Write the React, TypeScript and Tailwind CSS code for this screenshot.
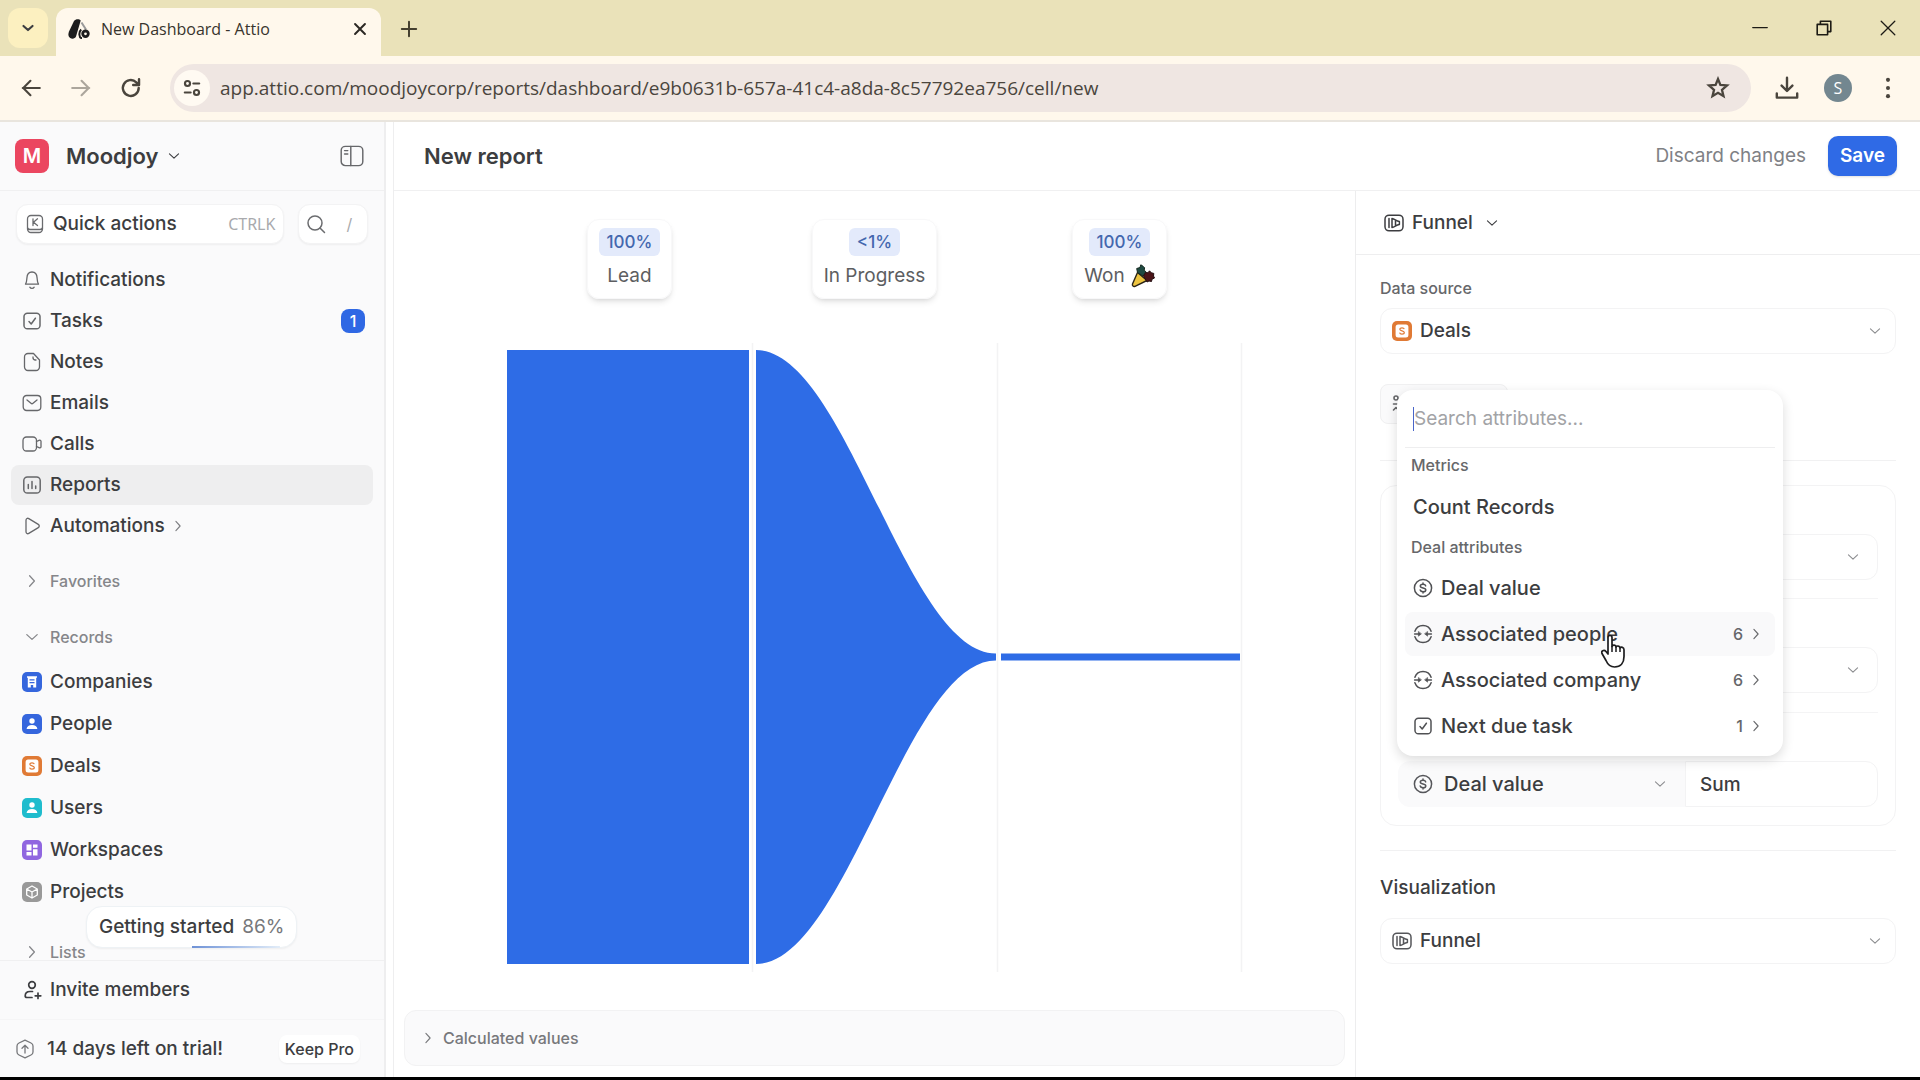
import type { ReactNode } from "react";

function Svg({ children, className = "size-5", sw = 1.3 }: { children: ReactNode; className?: string; sw?: number }) {
  return (
    <svg viewBox="0 0 20 20" fill="none" stroke="currentColor" strokeWidth={sw} strokeLinecap="round" strokeLinejoin="round" className={`shrink-0 ${className}`} aria-hidden="true">
      {children}
    </svg>
  );
}

const Chevron = ({ className = "size-4", right = false }: { className?: string; right?: boolean }) => (
  <Svg className={className} sw={1.6}>
    <path d={right ? "M7 3.5 13 10l-6 6.5" : "M3.5 7 10 13l6.5-6"} />
  </Svg>
);

const CheckBoxIcon = () => (
  <Svg sw={1.5}>
    <rect x="2" y="2.2" width="16" height="15.6" rx="3.4" />
    <path d="m7 10.6 2.200 2.400 4.200-5.800" />
  </Svg>
);

const FunnelIcon = () => (
  <Svg sw={1.5}>
    <rect x="1" y="2.200" width="18" height="15.600" rx="4" />
    <path d="M5 5.600v8.800M8 5.400v9.200c2.800-.4 4-2.600 7.400-3V8.400c-3.400-.4-4.600-2.600-7.400-3ZM11.500 8v4" />
  </Svg>
);

const CoinIcon = () => (
  <Svg sw={1.500}>
    <circle cx="10" cy="10" r="8.600" />
    <path d="M12.700 7.900c-.3-1.100-1.300-1.600-2.700-1.600-1.500 0-2.700.6-2.700 1.800 0 2.700 5.500 1.100 5.500 3.800 0 1.200-1.300 1.800-2.800 1.800-1.400 0-2.500-.6-2.800-1.700M10 4.900v1.400M10 13.700v1.400" />
  </Svg>
);

const RelationIcon = () => (
  <Svg sw={1.500}>
    <path d="M1.900 7.200a8.600 8.600 0 0 1 16.200 0M1.900 12.800a8.600 8.600 0 0 0 16.200 0" />
    <path d="M1.600 10h5M18.400 10h-5" />
    <path d="M5.400 7.800v4.400L8.200 10ZM14.600 7.800v4.400L11.800 10Z" fill="currentColor" strokeWidth="0.600" />
  </Svg>
);

const PersonGlyph = () => (
  <>
    <circle cx="10" cy="7" r="2.700" fill="white" />
    <path d="M4.600 15c.3-2.800 2.400-4.100 5.400-4.100s5.100 1.300 5.400 4.100Z" fill="white" />
  </>
);

function Tile({ color, children }: { color: string; children: ReactNode }) {
  return (
    <svg viewBox="0 0 20 20" className="size-5 shrink-0" aria-hidden="true">
      <rect width="20" height="20" rx="5" fill={color} />
      {children}
    </svg>
  );
}

const DealsTile = () => (
  <Tile color="#e07a35">
    <rect x="3.600" y="3.600" width="12.800" height="12.800" rx="2.500" fill="white" />
    <path d="M12.300 8.100c-.3-.9-1.100-1.300-2.300-1.300-1.300 0-2.200.5-2.200 1.500 0 2.200 4.500 1 4.500 3.300 0 1-1 1.600-2.300 1.600s-2.200-.5-2.400-1.500" fill="none" stroke="#e07a35" strokeWidth="1.200" />
  </Tile>
);

const navItems: { label: string; icon: ReactNode; active?: boolean; badge?: string; more?: boolean }[] = [
  { label: "Notifications", icon: <Svg><path d="M3.500 14.200h13c-1.200-1.600-1.200-3.400-1.400-6.200C14.900 4.300 13 2 10 2S5.100 4.300 4.900 8c-.2 2.800-.2 4.600-1.400 6.200ZM7.800 17.200c.5.800 1.300 1.200 2.200 1.200s1.700-.4 2.200-1.200" /></Svg> },
  { label: "Tasks", icon: <CheckBoxIcon />, badge: "1" },
  { label: "Notes", icon: <Svg><path d="M6 1.500h5.500L17.500 8v7a3.500 3.500 0 0 1-3.500 3.500H6A3.500 3.500 0 0 1 2.500 15V5A3.500 3.500 0 0 1 6 1.500ZM11 5v.5A2.500 2.500 0 0 0 13.500 8H14" /></Svg> },
  { label: "Emails", icon: <Svg><rect x="1.200" y="2.500" width="17.600" height="15" rx="3.400" /><path d="m5 7 4 3.300c.6.5 1.400.5 2 0L15 7" /></Svg> },
  { label: "Calls", icon: <Svg><rect x="1" y="3" width="13.500" height="14" rx="3.500" /><path d="M14.500 7.500 17 6.300c1-.5 2 0 2 1v5.400c0 1-1 1.500-2 1l-2.500-1.200" /></Svg> },
  { label: "Reports", icon: <Svg sw={1.500}><rect x="1.800" y="2" width="16.400" height="16" rx="3.600" /><path d="M6.300 9.500v4M10 6.500v7M13.700 11v2.500" /></Svg>, active: true },
  { label: "Automations", icon: <Svg><path d="M4 4.200c0-1.600 1.500-2.400 2.800-1.600l9.500 5.800c1.300.8 1.300 2.400 0 3.200l-9.500 5.800C5.500 18.200 4 17.400 4 15.800Z" /></Svg>, more: true },
];

const records: { label: string; icon: ReactNode }[] = [
  { label: "Companies", icon: <Tile color="#3566dd"><path d="M5 4.200h10v1.600h-.8v9.700h-3v-2.500H8.800v2.500h-3V5.800H5Z" fill="white" /><path d="M7.500 7.800h5M7.500 10.600h5" stroke="#3566dd" strokeWidth="1.200" /></Tile> },
  { label: "People", icon: <Tile color="#3566dd"><PersonGlyph /></Tile> },
  { label: "Deals", icon: <DealsTile /> },
  { label: "Users", icon: <Tile color="#1fbccd"><PersonGlyph /></Tile> },
  { label: "Workspaces", icon: <Tile color="#9066e0"><path d="M4.500 4.500h5v6h-5ZM11 4.500h4.500v3.300H11ZM4.500 12h5v3.500h-5ZM11 9.300h4.500v6.200H11Z" fill="white" /></Tile> },
  { label: "Projects", icon: <Tile color="#999999"><path d="m10 4 5.300 3v6L10 16l-5.300-3V7ZM4.700 7 10 10l5.300-3M10 10v6" fill="none" stroke="white" strokeWidth="1.300" strokeLinejoin="round" /></Tile> },
];

const attributes: { label: string; icon: ReactNode; count?: string; active?: boolean }[] = [
  { label: "Deal value", icon: <CoinIcon /> },
  { label: "Associated people", icon: <RelationIcon />, count: "6", active: true },
  { label: "Associated company", icon: <RelationIcon />, count: "6" },
  { label: "Next due task", icon: <CheckBoxIcon />, count: "1" },
];

const PartyIcon = () => (
  <svg viewBox="0 0 24 24" className="size-6" aria-hidden="true">
    <path d="M6.500 8.500 1.500 20c-.6 1.800 1 3 2.500 2.300L16 16.500Z" fill="#edc440" stroke="#2b2517" strokeWidth="1.400" />
    <path d="m6.500 8.500-.8-4L9 3.500l.8-2.700 2.200 1.400 1.600 1.600-.4 2.400 2 1.800-3.200 4Z" fill="#1f4a42" stroke="#15291f" />
    <path d="m12.500 12 2-3.500 2.500.3 1.500-2 1.800 2 2.500.6-.3 2.600 1 2-2.500 1.200-.5 2.300-2.500-.5-2 1Z" fill="#4a1418" stroke="#241012" />
  </svg>
);

const stages: { rate: string; label: string; icon?: ReactNode }[] = [
  { rate: "100%", label: "Lead" },
  { rate: "<1%", label: "In Progress" },
  { rate: "100%", label: "Won", icon: <PartyIcon /> },
];

function SelectBox({ label, value, icon, className = "rounded-xl border border-[#f3f3f4] bg-white", selectClass = "pl-[39px]", chevronClass = "mr-[13px]" }: { label: string; value?: string; icon?: ReactNode; className?: string; selectClass?: string; chevronClass?: string }) {
  return (
    <div className={`grid h-[46px] items-center ${className}`}>
      <select aria-label={label} className={`col-start-1 row-start-1 h-full w-full cursor-pointer appearance-none bg-transparent pr-10 font-medium outline-none ${selectClass}`}>
        <option>{value ?? ""}</option>
      </select>
      {icon && <span className="pointer-events-none col-start-1 row-start-1 ml-[11px] justify-self-start text-[#55565a]">{icon}</span>}
      <span className={`pointer-events-none col-start-1 row-start-1 justify-self-end text-[#8c8d90] ${chevronClass}`}><Chevron className="size-3.5" /></span>
    </div>
  );
}

function BrowserChrome() {
  return (
    <header className="shrink-0 font-['Open_Sans','Noto_Sans',sans-serif]">
      <div className="flex h-14 items-end bg-[#eae2b9]">
        <button aria-label="Search tabs" className="mb-2 ml-2 grid size-10 place-items-center self-end rounded-xl bg-[#fcf0c0]">
          <Svg className="size-3.5" sw={3}><path d="M3.500 7 10 13l6.500-6" /></Svg>
        </button>
        <div className="ml-2 flex h-12 w-[325px] items-center rounded-t-xl bg-[#fff8ec] pb-1.5 pl-3 pr-3">
          <svg viewBox="0 0 22 20" className="h-5 w-[22px] text-[#1c1c1c]" aria-hidden="true">
            <path d="M6 2C7.500-.3 11.500-.3 12.700 1.500L8 17.500c-1 2.200-3.700 2.700-5.800 1.500C.2 17.700 0 15.200 1 12.500Z" fill="currentColor" />
            <path d="m13.500 3.500 4.500 7" stroke="#999999" strokeWidth="2" />
            <path d="M13.200 10.500C10.500 13 10.800 19 14 19.200" fill="none" stroke="currentColor" strokeWidth="2" />
            <circle cx="17.500" cy="14.800" r="2.800" fill="none" stroke="currentColor" strokeWidth="2.800" />
          </svg>
          <span className="ml-[11px] flex-1 text-base text-[#38342d]">New Dashboard - Attio</span>
          <button aria-label="Close tab" className="text-[#2b2823]"><Svg className="size-[18px]" sw={2.200}><path d="m4.500 4.500 11 11M15.500 4.500l-11 11" /></Svg></button>
        </div>
        <button aria-label="New tab" className="mb-[18px] ml-[19px] text-[#45402f]"><Svg sw={2.200} className="size-[18px]"><path d="M10 2v16M2 10h16" /></Svg></button>
        <div className="mb-5 ml-auto mr-6 flex items-center gap-12 text-[#1d1b15]">
          <button aria-label="Minimize"><Svg className="size-4" sw={1.800}><path d="M1 9.500h18" /></Svg></button>
          <button aria-label="Restore"><Svg className="size-4" sw={2}><path d="M1.500 5.500h13v13h-13ZM5.500 5V1.500h13v13H15" /></Svg></button>
          <button aria-label="Close window"><Svg className="size-4" sw={1.600}><path d="m1.500 1.500 17 17M18.500 1.500l-17 17" /></Svg></button>
        </div>
      </div>
      <div className="flex h-[66px] items-center border-b-2 border-[#e9e5de] bg-[#fff8ec] pl-5 pr-5 text-[#4a453d]">
        <button aria-label="Back"><Svg sw={1.900} className="size-[22px]"><path d="M18 10H2.500M9.500 3.500 3 10l6.500 6.500" /></Svg></button>
        <button aria-label="Forward" className="ml-7 text-[#aca69c]"><Svg sw={1.900} className="size-[22px]"><path d="M2 10h15.500M10.500 3.500 17 10l-6.500 6.500" /></Svg></button>
        <button aria-label="Reload" className="ml-7"><Svg sw={2.200} className="size-[22px]"><path d="M17 10a7.200 7.200 0 1 1-2.200-5.200L17 7M17.300 2v5.200H12" /></Svg></button>
        <div className="ml-7 flex h-12 min-w-0 flex-1 items-center rounded-full bg-[#efe6e2] pl-1">
          <button aria-label="Site information" className="grid size-9 place-items-center rounded-full bg-[#fffaf2]">
            <Svg sw={2.400} className="size-[18px]"><circle cx="5" cy="5" r="2.800" /><path d="M11.500 5H18M2 15h6.500" /><circle cx="15" cy="15" r="2.800" /></Svg>
          </button>
          <input aria-label="Address" readOnly value="app.attio.com/moodjoycorp/reports/dashboard/e9b0631b-657a-41c4-a8da-8c57792ea756/cell/new" className="ml-[10px] min-w-0 flex-1 bg-transparent text-[19px] outline-none" />
          <button aria-label="Bookmark" className="mr-[21px]"><Svg sw={1.900} className="size-6"><path d="m10 2.500 2 5 5.500.4-4.200 3.600 1.300 5.300L10 14l-4.600 2.800 1.300-5.300L2.500 7.900 8 7.500Z" strokeLinejoin="miter" /></Svg></button>
        </div>
        <button aria-label="Downloads" className="ml-6"><Svg sw={2} className="size-6"><path d="M10 1.500v10.500M5.500 8 10 12.500 14.500 8M1.500 14.500V18h17v-3.500" /></Svg></button>
        <button aria-label="Profile" className="ml-[25px] grid size-7 place-items-center rounded-full bg-[#738790] text-base text-white">S</button>
        <button aria-label="Menu" className="ml-6"><Svg className="size-6"><g fill="currentColor" stroke="none"><circle cx="10" cy="3.200" r="1.700" /><circle cx="10" cy="10" r="1.700" /><circle cx="10" cy="16.800" r="1.700" /></g></Svg></button>
      </div>
    </header>
  );
}

function Sidebar() {
  return (
    <aside className="flex w-[386px] shrink-0 flex-col border-r-2 border-[#eeeeef] bg-[#fafafb]">
      <div className="flex h-[69px] shrink-0 items-center border-b border-[#f0f0f1] pl-[15px] pr-5">
        <span className="grid size-[34px] place-items-center rounded-lg bg-[#eb4660] text-xl font-semibold text-white">M</span>
        <button className="ml-[17px] flex items-center gap-2 text-[22px] font-semibold">Moodjoy <Chevron className="size-3.5" /></button>
        <button aria-label="Toggle sidebar" className="ml-auto text-[#66676a]"><Svg className="size-6" sw={1.200}><rect x="1" y="2" width="18" height="16" rx="3.500" /><path d="M9 2v16M3.800 5.500h2.700M3.800 8.300h2.700" /></Svg></button>
      </div>
      <div className="flex min-h-0 flex-1 flex-col overflow-hidden">
        <div className="flex shrink-0 gap-3.5 px-4 pt-[13px]">
          <button className="flex h-10 w-[270px] items-center rounded-xl border border-[#f3f3f4] bg-white pl-2 pr-2 shadow-xs">
            <span className="text-[#6b6c6f]"><Svg><path d="M2.500 14.500V5A3.500 3.500 0 0 1 6 1.500h8A3.500 3.500 0 0 1 17.500 5v10a3.500 3.500 0 0 1-3.500 3.500H6A3.500 3.500 0 0 1 2.500 15M2.500 13.500a2.500 2.500 0 0 0 2.500 2h10a2.500 2.500 0 0 0 2.500-2M8 4.800v6.700M12.500 4.800 8.500 8.200l4 3.300" /></Svg></span>
            <span className="ml-2 font-medium">Quick actions</span>
            <kbd className="ml-auto font-sans text-base text-[#a9aaad]">CTRLK</kbd>
          </button>
          <button aria-label="Search" className="flex h-10 w-[70px] items-center gap-5 rounded-xl border border-[#f3f3f4] bg-white pl-[7px] text-[#6b6c6f] shadow-xs">
            <Svg sw={1.500}><circle cx="9" cy="9" r="7" /><path d="m14 14 4.500 4.500" /></Svg>
            <span className="text-base text-[#a9aaad]">/</span>
          </button>
        </div>
        <nav className="mt-4 flex flex-col gap-px px-[11px]">
          {navItems.map((n) => (
            <a key={n.label} href="#" className={`flex h-10 items-center rounded-lg pl-[11px] pr-2 font-medium ${n.active ? "bg-[#eeeeef]" : ""}`}>
              <span className="text-[#66676a]">{n.icon}</span>
              <span className="ml-2">{n.label}</span>
              {n.more && <span className="ml-1.5 text-[#7c7d80]"><Chevron right className="size-3.5" /></span>}
              {n.badge && <span className="ml-auto grid size-6 place-items-center rounded-lg bg-[#2f68e4] text-base text-white">{n.badge}</span>}
            </a>
          ))}
        </nav>
        <button className="mt-[15px] flex h-10 shrink-0 items-center gap-[10px] px-6 text-base font-medium text-[#85868a]"><Chevron right /> Favorites</button>
        <button className="mt-4 flex h-10 shrink-0 items-center gap-[10px] px-6 text-base font-medium text-[#85868a]"><Chevron /> Records</button>
        <nav className="mt-[5px] flex flex-col gap-0.5 px-[22px]">
          {records.map((r) => (
            <a key={r.label} href="#" className="flex h-10 items-center gap-2 font-medium">{r.icon}{r.label}</a>
          ))}
        </nav>
        <div className="relative mt-8">
          <button className="flex h-4 items-center gap-[10px] px-6 text-base font-medium leading-4 text-[#85868a]"><Chevron right /> Lists</button>
          <button className="absolute -top-[38px] left-[86px] flex h-[42px] items-center gap-2 whitespace-nowrap rounded-2xl border border-[#eef2f5] bg-white px-3 font-medium shadow-xs">
            Getting started <span className="font-normal text-[#77787b]">86%</span>
            <span className="absolute -bottom-px right-4 h-0.5 w-[88px] bg-linear-to-r from-[#6f92d6] to-[#e3edf8]" />
          </button>
        </div>
      </div>
      <div className="shrink-0 border-t border-[#f0f0f1] bg-[#fafafb]">
        <button className="flex h-[58px] items-center gap-2 px-[22px] font-medium">
          <Svg sw={1.700}><circle cx="10" cy="5" r="3.300" /><path d="M10.500 11.500H8c-3 0-4.800 2-4.800 4.500 0 1 .8 1.500 1.800 1.500h5M16 13v5.500M13.200 15.800h5.600" /></Svg>
          Invite members
        </button>
        <div className="flex h-[58px] items-center border-t border-[#f5f5f6] pl-[15px] pr-6 font-medium">
          <span className="text-[#77787b]"><Svg><path d="m10 1.200 6 2.800c1.300.6 2 1.700 2 3v6c0 1.300-.7 2.400-2 3l-6 2.800L4 16c-1.300-.6-2-1.700-2-3V7c0-1.300.7-2.400 2-3ZM10 14V6.500M7 9.200l3-2.900 3 2.900" /></Svg></span>
          <span className="ml-3">14 days left on trial!</span>
          <button className="ml-auto rounded-lg bg-white px-1.5 py-0.5 text-base shadow-xs">Keep Pro</button>
        </div>
      </div>
    </aside>
  );
}

function FunnelChart() {
  return (
    <section aria-label="Funnel chart" className="flex min-h-0 flex-1 flex-col px-[113px] pt-7">
      <div className="grid grid-cols-3">
        {stages.map((s) => (
          <div key={s.label} className="flex h-20 flex-col items-center justify-self-center rounded-xl border border-[#f8f8f9] px-[11px] pt-2 shadow-md">
            <span className="grid h-7 place-items-center rounded-md bg-[#e3eafb] px-2 text-[17px] font-medium text-[#4467ae]">{s.rate}</span>
            <span className="mt-1.5 flex items-center gap-1.5 whitespace-nowrap text-[#5d5e61]">{s.label}{s.icon}</span>
          </div>
        ))}
      </div>
      <svg viewBox="0 0 735 630" preserveAspectRatio="none" className="mt-11 min-h-0 w-full flex-1 overflow-visible" aria-hidden="true">
        <path d="M245.500 0v630M490.500 0v630M734.500 0v630" stroke="#f3f3f4" strokeWidth="1.500" />
        <path d="M0 7h242v615H0Z" fill="#2e6ce6" />
        <path d="M249 7c90 0 150 304 240 304v7c-90 0-150 304-240 304Z" fill="#2e6ce6" />
        <path d="M494 311h239v7H494Z" fill="#2e6ce6" />
      </svg>
    </section>
  );
}

function AttributeMenu() {
  return (
    <div className="absolute left-[17px] top-[6px] z-10 w-[386px] rounded-2xl bg-white px-2 pb-2 shadow-[0_4px_12px_rgba(0,0,0,0.14)]">
      <div className="flex h-[58px] items-center border-b border-[#eeeeef] pl-2">
        <span className="h-6 w-px bg-[#4965c9]" />
        <input aria-label="Search attributes" placeholder="Search attributes..." className="w-full bg-transparent outline-none placeholder:text-[#a2a3a6]" />
      </div>
      <h3 className="mt-[5px] px-1.5 text-base font-medium leading-6 text-[#66676a]">Metrics</h3>
      <button className="mt-2 flex h-11 w-full items-center px-2 text-xl font-medium">Count Records</button>
      <h3 className="mt-1.5 px-1.5 text-base font-medium leading-6 text-[#66676a]">Deal attributes</h3>
      <div className="mt-[7px] flex flex-col gap-0.5">
        {attributes.map((a) => (
          <button key={a.label} className={`flex h-11 items-center gap-2 rounded-lg px-2 text-xl font-medium ${a.active ? "bg-[#f9f9fa]" : ""}`}>
            <span className="text-[#505154]">{a.icon}</span>
            {a.label}
            {a.count && <span className="ml-auto mr-1 flex items-center gap-1.5 text-base text-[#66676a]">{a.count}<Chevron right className="size-3.5" /></span>}
          </button>
        ))}
      </div>
      <svg viewBox="0 0 26 36" className="absolute left-[204px] top-[244px] h-9 w-[26px]" aria-hidden="true">
        <path d="M7 3.500c0-2.700 4-2.700 4 0v9c.5-2 4-1.800 4 .5.800-1.600 3.800-1.200 4 .9 1-1.300 4-.8 4 1.800v6.800c0 6-3 10.500-9.500 10.500-5 0-7-3-8.500-6.500l-4-7c-1.200-2.500 2-4.300 4-2l2 2.500Z" fill="white" stroke="#1d1d1f" strokeWidth="1.700" strokeLinejoin="round" />
        <path d="M11 12v6M15 13v5M19 14v4" stroke="#1d1d1f" strokeWidth="1.500" />
      </svg>
    </div>
  );
}

function ConfigPanel() {
  return (
    <aside className="flex w-[565px] shrink-0 flex-col border-l border-[#ededee]">
      <div className="flex h-[64px] shrink-0 items-center border-b border-[#eeeeef] px-7">
        <button className="flex items-center gap-2 font-medium"><FunnelIcon /> Funnel <Chevron className="ml-1 size-3.5" /></button>
      </div>
      <div className="flex flex-1 flex-col px-6">
        <h2 className="mt-[21px] text-base font-medium leading-6 text-[#66676a]">Data source</h2>
        <div className="mt-2"><SelectBox label="Data source" value="Deals" icon={<DealsTile />} /></div>
        <div className="relative mt-[30px]">
          <button className="flex h-10 w-32 items-center rounded-lg border border-[#f0f0f1] bg-[#fafafb] pl-2 text-[#66676a]">
            <Svg sw={1.600}><circle cx="7" cy="4" r="2" /><path d="M4.500 10h5.500M4.500 16 7 13.500 9.500 16" /></Svg>
            <span className="ml-2">Filter</span>
          </button>
          <AttributeMenu />
        </div>
        <hr className="mt-9 border-[#f1f1f2]" />
        <div className="mt-6 flex flex-col rounded-2xl border border-[#f3f3f4] px-[17px] pb-[18px] pt-12">
          <SelectBox label="Stage attribute" chevronClass="mr-[17px]" />
          <hr className="my-[18px] border-[#f4f4f5]" />
          <div className="pt-[30px]"><SelectBox label="Stages" chevronClass="mr-[17px]" /></div>
          <hr className="mb-12 mt-[19px] border-[#f4f4f5]" />
          <div className="flex">
            <SelectBox label="Metric attribute" value="Deal value" icon={<span className="ml-1 block"><CoinIcon /></span>} className="w-[287px] shrink-0 rounded-l-xl bg-[#fafafb]" selectClass="pl-[46px] text-xl" chevronClass="mr-[18px]" />
            <input aria-label="Aggregation" readOnly value="Sum" className="h-[46px] min-w-0 flex-1 rounded-r-xl border border-[#f3f3f4] bg-white pl-[14px] font-medium outline-none" />
          </div>
        </div>
        <hr className="mt-6 border-[#f1f1f2]" />
        <h2 className="mt-[23px] font-medium">Visualization</h2>
        <div className="mt-4"><SelectBox label="Visualization" value="Funnel" icon={<FunnelIcon />} /></div>
      </div>
    </aside>
  );
}

export default function App() {
  return (
    <div className="flex h-screen flex-col overflow-hidden border-b-[3px] border-black bg-white font-['Inter',sans-serif] text-[19px] leading-7 text-[#3c3d40]">
      <BrowserChrome />
      <div className="flex min-h-0 flex-1 gap-[7px]">
        <Sidebar />
        <main className="flex min-w-0 flex-1 flex-col border-l border-[#eeeeef]">
          <div className="flex h-[69px] shrink-0 items-center border-b border-[#f0f0f1] pl-[30px] pr-[23px]">
            <h1 className="text-[22px] font-semibold">New report</h1>
            <button className="ml-auto text-[#808185]">Discard changes</button>
            <button className="ml-[22px] h-10 rounded-[10px] bg-[#2f6ae6] px-3 font-semibold text-white shadow-sm">Save</button>
          </div>
          <div className="flex min-h-0 flex-1">
            <div className="flex min-w-0 flex-1 flex-col">
              <FunnelChart />
              <button className="mx-[10px] mb-[11px] mt-[38px] flex h-14 shrink-0 items-center gap-2 rounded-xl border border-[#f2f2f3] bg-[#fafafb] px-4 text-base font-medium text-[#77787b]">
                <Chevron right className="size-3.5" /> Calculated values
              </button>
            </div>
            <ConfigPanel />
          </div>
        </main>
      </div>
    </div>
  );
}
